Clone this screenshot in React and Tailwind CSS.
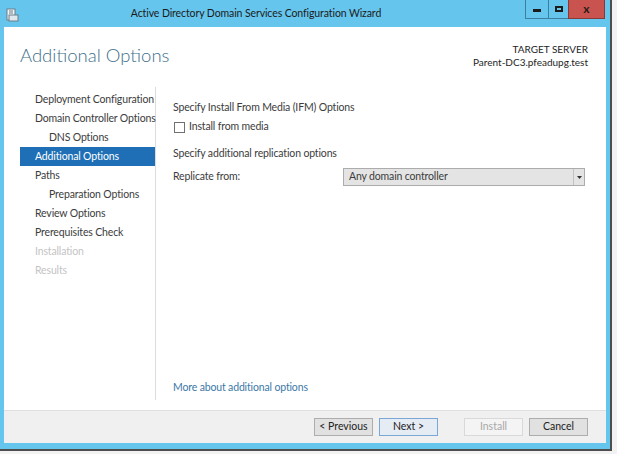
import React from 'react'

const navItems = [
    { label: 'Deployment Configuration', indent: false, state: 'normal' },
    { label: 'Domain Controller Options', indent: false, state: 'normal' },
    { label: 'DNS Options', indent: true, state: 'normal' },
    { label: 'Additional Options', indent: false, state: 'active' },
    { label: 'Paths', indent: false, state: 'normal' },
    { label: 'Preparation Options', indent: true, state: 'normal' },
    { label: 'Review Options', indent: false, state: 'normal' },
    { label: 'Prerequisites Check', indent: false, state: 'normal' },
    { label: 'Installation', indent: false, state: 'disabled' },
    { label: 'Results', indent: false, state: 'disabled' },
]

function NavItem({ item }) {
    const base = 'h-[19px] flex items-center pr-2 text-[10.5px] tracking-[-0.15px] whitespace-nowrap'
    const pad = item.indent ? 'pl-[29px]' : 'pl-[15px]'
    let color = 'text-[#3c3c3c]'
    if (item.state === 'active') color = 'bg-[#1e6fb5] text-white'
    if (item.state === 'disabled') color = 'text-[#c4c4c4]'
    return <div className={`${base} ${pad} ${color}`}>{item.label}</div>
}

function WizardButton({ children, variant }) {
    let cls = 'border-[#adadad] bg-[#e1e1e1] text-[#222]'
    if (variant === 'default') cls = 'border-[#7aa7d6] bg-[#e5ecf4] text-[#222]'
    if (variant === 'disabled') cls = 'border-[#d9d9d9] bg-[#f4f4f4] text-[#a8a8a8]'
    return (
        <div className={`w-[59px] h-[18px] border flex items-center justify-center text-[10.5px] ${cls}`}>
            {children}
        </div>
    )
}

function AppIcon() {
    return (
        <svg width="13" height="14" viewBox="0 0 13 14">
            <rect x="1" y="1" width="8" height="11" fill="#f4f4f4" stroke="#6a7f8c" strokeWidth="1" />
            <rect x="3" y="7" width="9" height="6" fill="#dfe7ec" stroke="#6a7f8c" strokeWidth="1" />
            <line x1="3" y1="3" x2="7" y2="3" stroke="#6a7f8c" strokeWidth="1" />
            <line x1="3" y1="5" x2="7" y2="5" stroke="#6a7f8c" strokeWidth="1" />
        </svg>
    )
}

export default function App() {
    return (
        <div className="w-[617px] h-[454px] bg-[#f2f2f2] overflow-hidden" style={{ fontFamily: 'Lato, "Noto Sans", sans-serif' }}>
            <div className="w-[612px] h-[451px] bg-[#66c5ec] border-r-2 border-b-2 border-[#4d4d4d] flex flex-col">
                {/* Title bar */}
                <div className="h-[27px] flex items-start relative shrink-0">
                    <div className="pt-[8px] pl-[6px]"><AppIcon /></div>
                    <div className="absolute left-0 right-[98px] top-[6px] text-center text-[10.5px] tracking-[-0.1px] text-[#1b1b1b]">
                        Active Directory Domain Services Configuration Wizard
                    </div>
                    <div className="ml-auto mr-[5px] flex h-[19px] relative z-10">
                        <div className="w-[23px] h-full border-l border-b border-[#3c7fa0] flex items-center justify-center">
                            <div className="w-[8px] h-[3px] bg-[#1b1b1b] mt-[3px]" />
                        </div>
                        <div className="w-[20px] h-full border-l border-b border-[#3c7fa0] flex items-center justify-center">
                            <div className="w-[8px] h-[6px] border-2 border-[#1b1b1b]" />
                        </div>
                        <div className="w-[37px] h-full bg-[#c9544f] border-l border-b border-r border-[#8a3a36] flex items-center justify-center text-[12px] font-bold text-[#2a1a1a]">
                            x
                        </div>
                    </div>
                </div>

                {/* Client area */}
                <div className="ml-[4px] mr-[4px] flex-1 flex flex-col bg-white">
                    {/* Header */}
                    <div className="h-[58px] flex justify-between items-start shrink-0">
                        <div className="pl-[16px] pt-[19px] text-[18.5px] font-light text-[#3f6f8a] leading-none">
                            Additional Options
                        </div>
                        <div className="pr-[18px] pt-[16px] text-right text-[10px] leading-[13px] text-[#1e1e1e]">
                            <div>TARGET SERVER</div>
                            <div>Parent-DC3.pfeadupg.test</div>
                        </div>
                    </div>

                    {/* Body */}
                    <div className="flex-1 flex">
                        <div className="w-[152px] pl-[1px] pt-[2px] pb-[10px] flex flex-col">
                            <div className="pl-[15px] flex flex-col border-r border-[#dcdcdc] h-full pt-[3px]">
                                {navItems.map((item) => (
                                    <div key={item.label} className="-ml-[15px] pl-[15px]">
                                        <NavItem item={item} />
                                    </div>
                                ))}
                            </div>
                        </div>

                        <div className="flex-1 pl-[17px] pr-[21px] pt-[14px] pb-[14px] flex flex-col text-[10.5px] tracking-[-0.15px] text-[#3c3c3c]">
                            <div className="h-[18px] flex items-center">Specify Install From Media (IFM) Options</div>
                            <div className="h-[18px] flex items-center gap-[4px] mt-[1px]">
                                <div className="w-[11px] h-[11px] border border-[#707070] bg-white ml-[1px]" />
                                <span>Install from media</span>
                            </div>
                            <div className="h-[18px] flex items-center mt-[9px]">Specify additional replication options</div>
                            <div className="flex items-center mt-[5px]">
                                <div className="w-[170px]">Replicate from:</div>
                                <div className="flex-1 h-[18px] border border-[#acacac] bg-[#e4e4e4] flex items-center">
                                    <div className="flex-1 pl-[5px]">Any domain controller</div>
                                    <div className="w-[11px] h-full border-l border-[#c2c2c2] flex items-center justify-center">
                                        <svg width="5" height="3" viewBox="0 0 5 3"><path d="M0 0 L5 0 L2.5 3 Z" fill="#333" /></svg>
                                    </div>
                                </div>
                            </div>
                            <div className="mt-auto text-[#3b78a6]">More about additional options</div>
                        </div>
                    </div>

                    {/* Footer */}
                    <div className="h-[33px] bg-[#f0f0f0] border-t border-[#dfdfdf] flex items-center justify-end pr-[18px] shrink-0">
                        <div className="flex gap-[6px]">
                            <WizardButton>&lt; Previous</WizardButton>
                            <WizardButton variant="default">Next &gt;</WizardButton>
                        </div>
                        <div className="flex gap-[6px] ml-[26px]">
                            <WizardButton variant="disabled">Install</WizardButton>
                            <WizardButton>Cancel</WizardButton>
                        </div>
                    </div>
                </div>
                <div className="h-[6px] shrink-0" />
            </div>
        </div>
    )
}
